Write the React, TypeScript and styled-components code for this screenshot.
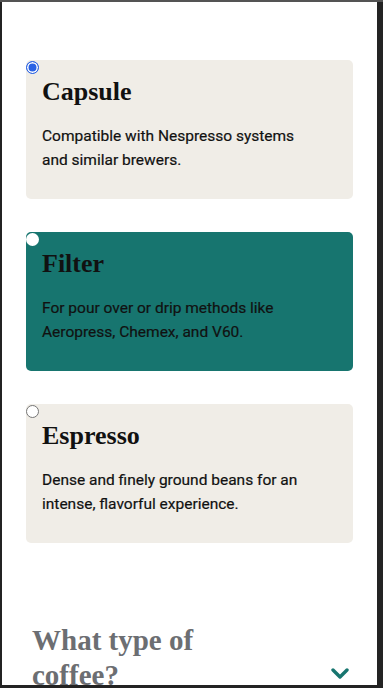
import React, { useState } from "react";
import styled, { createGlobalStyle } from "styled-components";

const GlobalStyle = createGlobalStyle`
	html, body {
		margin: 0;
		padding: 0;
		background: #232323;
		height: 100%;
	}
	* {
		box-sizing: border-box;
	}
`;

const Frame = styled.div`
	width: 383px;
	height: 688px;
	background: #232323;
	border-top: 2px solid #545454;
	padding: 0 6px 3px 2px;
	overflow: hidden;
`;

const Screen = styled.main`
	background: #ffffff;
	height: 683px;
	overflow: hidden;
	padding: 58px 24px 0;
	display: flex;
	flex-direction: column;
`;

const OptionList = styled.div`
	display: flex;
	flex-direction: column;
	gap: 33px;
`;

const Card = styled.label<{ $selected: boolean }>`
	position: relative;
	display: block;
	height: 139px;
	border-radius: 5px;
	padding: 17px 16px 28px;
	background: ${(props) => (props.$selected ? "#17756f" : "#f0ede7")};
	cursor: pointer;
`;

const Radio = styled.input<{ $variant: string }>`
	position: absolute;
	top: 1px;
	left: 0;
	margin: 0;
	width: 13px;
	height: 13px;
	border-radius: 50%;
	appearance: none;
	border: ${(props) =>
		props.$variant === "checked"
			? "1.5px solid #2a62e4"
			: props.$variant === "plain"
			? "none"
			: "1px solid #767676"};
	box-shadow: ${(props) =>
		props.$variant === "checked" ? "inset 0 0 0 1.5px #fff" : "none"};
	background: ${(props) => (props.$variant === "checked" ? "#2a62e4" : "#fff")};
`;

const Title = styled.h3`
	margin: 0 0 17px;
	font-family: "Liberation Serif", "DejaVu Serif", serif;
	font-weight: 700;
	font-size: 26px;
	line-height: 30px;
	color: #111;
`;

const Description = styled.p`
	margin: 0;
	max-width: 262px;
	font-family: Roboto, "Liberation Sans", sans-serif;
	font-size: 15.5px;
	line-height: 24px;
	color: #111;
	-webkit-text-stroke: 0.2px #111;
`;

const Question = styled.div`
	margin-top: 80px;
	padding-left: 6px;
	display: flex;
	justify-content: space-between;
	align-items: flex-end;
`;

const QuestionTitle = styled.h2`
	margin: 0;
	max-width: 200px;
	font-family: "Liberation Serif", "DejaVu Serif", serif;
	font-weight: 700;
	font-size: 29px;
	line-height: 35px;
	color: #6c6e72;
`;

const Chevron = styled.svg`
	margin: 0 4px 14px 0;
	flex-shrink: 0;
`;

const options = [
	{
		id: "capsule",
		title: "Capsule",
		text: "Compatible with Nespresso systems and similar brewers.",
		radio: "checked",
	},
	{
		id: "filter",
		title: "Filter",
		text: "For pour over or drip methods like Aeropress, Chemex, and V60.",
		radio: "plain",
	},
	{
		id: "espresso",
		title: "Espresso",
		text: "Dense and finely ground beans for an intense, flavorful experience.",
		radio: "empty",
	},
];

export default function App() {
	const [selected] = useState("filter");
	return (
		<>
			<GlobalStyle />
			<Frame>
				<Screen>
					<OptionList>
						{options.map((o) => (
							<Card key={o.id} $selected={selected === o.id}>
								<Radio
									type="radio"
									name="grind"
									$variant={o.radio}
									defaultChecked={o.radio === "checked"}
								/>
								<Title>{o.title}</Title>
								<Description>{o.text}</Description>
							</Card>
						))}
					</OptionList>
					<Question>
						<QuestionTitle>What type of coffee?</QuestionTitle>
						<Chevron width="18" height="11" viewBox="0 0 18 11">
							<path
								d="M2 2 L9 9 L16 2"
								fill="none"
								stroke="#17756f"
								strokeWidth="3.4"
								strokeLinecap="round"
								strokeLinejoin="round"
							/>
						</Chevron>
					</Question>
				</Screen>
			</Frame>
		</>
	);
}
